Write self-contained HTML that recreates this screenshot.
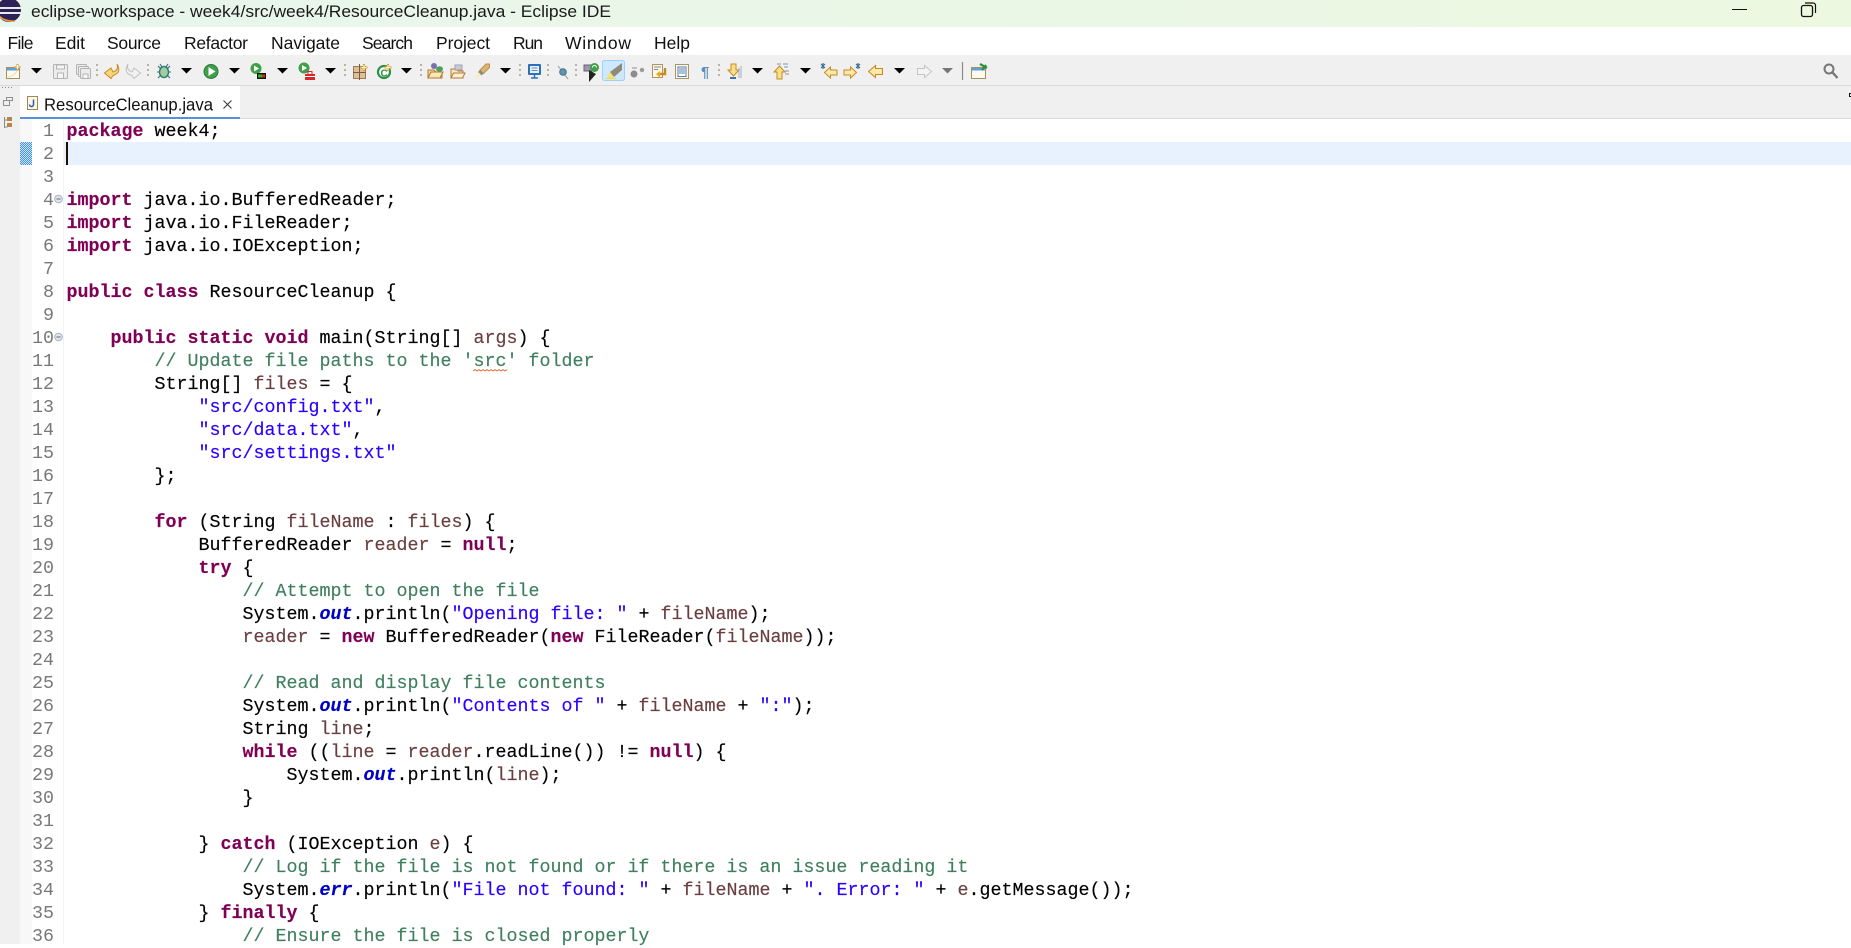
<!DOCTYPE html>
<html><head><meta charset="utf-8"><title>Eclipse IDE</title>
<style>
html,body{margin:0;padding:0;width:1851px;height:944px;overflow:hidden;background:#fff}
.abs{position:absolute}
#code,#nums{position:absolute;margin:0;font-family:"Liberation Mono",monospace;font-size:18.33px;line-height:23px;white-space:pre;color:#000}
#code{left:66.5px;top:120px;-webkit-text-stroke:.15px currentColor}
#nums{left:26px;top:120px;width:28px;text-align:right;color:#787878}
b{color:#7f0055;font-weight:bold}
i{color:#3f7f5f;font-style:normal}
u{color:#2a00ff;text-decoration:none}
s{color:#6a3e3e;text-decoration:none}
em{color:#0000c0;font-style:italic;font-weight:bold}
</style></head><body>
<div class="abs" style="left:0;top:0;width:1851px;height:27px;background:linear-gradient(90deg,#e8f5ec,#ecf8e0)"></div>
<div class="abs" style="left:0;top:27px;width:1851px;height:28px;background:#fff"></div>
<div class="abs" style="left:0;top:55px;width:1851px;height:30px;background:#f0f0f0"></div>
<div class="abs" style="left:0;top:85px;width:1851px;height:1px;background:#d9d9d9"></div>
<div class="abs" style="left:0;top:86px;width:1851px;height:33px;background:#f0f0f0"></div>
<div class="abs" style="left:0;top:118px;width:1851px;height:1px;background:#d9d9d9"></div>
<div class="abs" style="left:0;top:86px;width:20px;height:858px;background:#f0f0f0"></div>
<div class="abs" style="left:20px;top:119px;width:1831px;height:825px;background:#fff"></div>
<div class="abs" style="left:20px;top:119px;width:12px;height:825px;background:#f8f8f8"></div>
<div class="abs" style="left:63px;top:119px;width:1px;height:825px;background:#f3f3f3"></div>
<div class="abs" style="left:20px;top:86px;width:220px;height:31px;background:#fff"></div>
<div class="abs" style="left:20px;top:117px;width:220px;height:2px;background:#5b8fdb"></div>
<div class="abs" style="left:64px;top:142px;width:1787px;height:23px;background:#e8f2fe"></div>
<div class="abs" style="left:66px;top:142px;width:2px;height:23px;background:#1a1000"></div>

<svg class="abs" style="left:0;top:0" width="1851" height="944" viewBox="0 0 1851 944">
<defs><pattern id="dith" width="2" height="2" patternUnits="userSpaceOnUse"><rect width="2" height="2" fill="#3f92e6"/><rect width="1" height="1" fill="#cfe4fa"/><rect x="1" y="1" width="1" height="1" fill="#cfe4fa"/></pattern></defs>
<rect x="20" y="142" width="12" height="23" fill="url(#dith)"/>
<!-- logo -->
<circle cx="9" cy="10" r="12" fill="#2c2255"/>
<path d="M-3 7h24v2H-3zM-3 12h24v2H-3z" fill="#e8e8f0"/>
<path d="M-2 15Q4 22 15 21" stroke="#f0a040" stroke-width="1.6" fill="none"/>
<text x="31" y="17" font-family="Liberation Sans" font-size="17" fill="#1a1a1a" textLength="580" lengthAdjust="spacingAndGlyphs">eclipse-workspace - week4/src/week4/ResourceCleanup.java - Eclipse IDE</text>
<path d="M1732 9.5h15" stroke="#111" stroke-width="1"/>
<rect x="1801.5" y="5.5" width="11" height="11" rx="2" fill="none" stroke="#111" stroke-width="1.3"/>
<path d="M1805 3h8a2.5 2.5 0 0 1 2.5 2.5V13" fill="none" stroke="#111" stroke-width="1.2"/>
<g font-family="Liberation Sans" font-size="17.5" fill="#111">
<text x="7.5" y="49" textLength="26">File</text>
<text x="55" y="49" textLength="30">Edit</text>
<text x="107" y="49" textLength="54">Source</text>
<text x="184" y="49" textLength="64">Refactor</text>
<text x="271" y="49" textLength="69">Navigate</text>
<text x="362" y="49" textLength="51">Search</text>
<text x="436" y="49" textLength="54">Project</text>
<text x="513" y="49" textLength="30">Run</text>
<text x="565" y="49" textLength="66">Window</text>
<text x="654" y="49" textLength="36">Help</text>
</g>
<!-- dropdown arrows -->
<g fill="#000">
<polygon points="31,68 42,68 36.5,73.5"/><polygon points="181,68 192,68 186.5,73.5"/><polygon points="229,68 240,68 234.5,73.5"/><polygon points="277,68 288,68 282.5,73.5"/><polygon points="325,68 336,68 330.5,73.5"/><polygon points="401,68 412,68 406.5,73.5"/><polygon points="500,68 511,68 505.5,73.5"/><polygon points="752,68 763,68 757.5,73.5"/><polygon points="800,68 811,68 805.5,73.5"/><polygon points="894,68 905,68 899.5,73.5"/>
</g>
<polygon points="942,68 953,68 947.5,73.5" fill="#777"/>
<!-- separators -->
<g stroke="#b8b2a2" stroke-width="2" stroke-dasharray="2 3">
<path d="M97 64v15M148 64v15M345 64v15M421 64v15M520 64v15M548 64v15M576 64v15M719 64v15"/>
</g>
<path d="M962.5 62v18" stroke="#8a8a8a" stroke-width="1.2"/>
<!-- new window -->
<rect x="6.5" y="67.5" width="13" height="11" fill="#fdfbef" stroke="#a5905f"/><rect x="7" y="68" width="12" height="2.5" fill="#5f9fdc"/><path d="M8 77Q14 76 18 70" stroke="#f0dc90" fill="none"/>
<path d="M17.5 64v6M14.5 67h6" stroke="#d9a441" stroke-width="2"/><path d="M17.5 65v4M15.5 67h4" stroke="#fff7d8" stroke-width="1"/>
<!-- save -->
<g fill="#ececec" stroke="#b4b4b4"><rect x="53.5" y="64.5" width="14" height="14" rx="1"/><rect x="56.5" y="65" width="8" height="4" fill="#f6f6f6"/><rect x="57.5" y="73" width="6" height="5.5" fill="#f6f6f6"/>
<rect x="76.5" y="64.5" width="10" height="10" rx="1"/><rect x="78.5" y="66.5" width="10" height="10" rx="1"/><rect x="80.5" y="68.5" width="10" height="10" rx="1"/><rect x="83" y="74" width="5" height="4.5" fill="#f6f6f6"/></g>
<!-- back / forward -->
<path d="M117 64Q119 70 113 72L111 68L104.5 73L111 78.500L113 75.500Q122 73 117 64Z" fill="#f9d57e" stroke="#c88a1e"/>
<path d="M128 64Q126 70 132 72L134 68L140.500 73L134 78.500L132 75.500Q123 73 128 64Z" fill="#f2f2f2" stroke="#c0c0c0"/>
<!-- bug -->
<ellipse cx="164" cy="72" rx="4.500" ry="5.500" fill="#9fcfa0" stroke="#3c7f6e" stroke-width="1.500"/>
<path d="M158 66l3 3M170 66l-3 3M157 72h3M171 72h-3M158 78l3-3M170 78l-3-3M160 64l2 3M168 64l-2 3" stroke="#2c6f78" stroke-width="1.100"/>
<!-- run -->
<circle cx="211" cy="71.500" r="7" fill="#3f9f4a" stroke="#2a7a38"/><polygon points="208.500,67 215.500,71.500 208.500,76" fill="#fff"/>
<circle cx="256" cy="68.500" r="5.500" fill="#3f9f4a"/><polygon points="254,65.500 259,68.500 254,71.500" fill="#fff"/><rect x="257" y="73" width="9" height="6" fill="#111"/><rect x="258" y="74.500" width="4" height="3" fill="#22bb22"/><rect x="262" y="74.500" width="3" height="3" fill="#d22"/>
<circle cx="304" cy="68" r="5.500" fill="#3f9f4a"/><polygon points="302,65 307,68 302,71" fill="#fff"/><rect x="305" y="74" width="10" height="6" fill="#d8262c"/><rect x="308" y="71.500" width="4" height="3" fill="none" stroke="#d8262c"/><path d="M305 76.500h10" stroke="#fff"/>
<!-- new type / class -->
<rect x="353.500" y="66.500" width="12" height="12" fill="#dcc09a" stroke="#9f7a50"/><path d="M359.500 64v16M353 72.500h13" stroke="#7f5a38"/>
<path d="M364 64v7M360.500 67.500h7" stroke="#d9a441" stroke-width="2.200"/><path d="M364 65v5M361.500 67.500h5" stroke="#fff5cc"/>
<circle cx="384" cy="72" r="6" fill="#fff" stroke="#2c8f4a" stroke-width="2.200"/><text x="380.500" y="76.500" font-family="Liberation Sans" font-size="10" font-weight="bold" fill="#2c8f4a">C</text>
<path d="M388 64v7M384.500 67.500h7" stroke="#d9a441" stroke-width="2.200"/><path d="M388 65v5M385.500 67.500h5" stroke="#fff5cc"/>
<!-- open -->
<path d="M428 70h6l2 2h6v6h-14z" fill="#f8d898" stroke="#b47a30"/><path d="M428 78l3-6h12l-3 6z" fill="#fbe6b8" stroke="#b47a30"/><circle cx="434" cy="66" r="3" fill="#7a6fb0"/><ellipse cx="439.500" cy="69" rx="3.500" ry="2.800" fill="#4f9f5f"/>
<path d="M451 69h5l2 2h5v7h-12z" fill="#fbe8c0" stroke="#b47a30"/><path d="M451 78l2.500-5h11.500l-2.500 5z" fill="#fdf0d2" stroke="#b47a30"/><rect x="455" y="65" width="7" height="5" fill="#c9c9d6" stroke="#a0a0b0"/>
<path d="M480 70l6-6h3.500v3.500l-6 6z" fill="#d8b57e" stroke="#c09048"/><path d="M480 70l3.500 3.500-2 2-3.500-3.500z" fill="#8a8a8a"/><path d="M478 72l3.500 3.500-6.500 3.500z" fill="#f7efb8"/>
<!-- monitor -->
<rect x="528" y="64" width="13" height="11" rx="1" fill="#2f6fb8"/><rect x="530" y="66" width="9" height="7" fill="#e8f0fa"/><path d="M531.500 68h6M531.500 70.500h6" stroke="#5f8fc0"/><path d="M531 78h7M534.500 75v3" stroke="#2f6fb8" stroke-width="1.500"/>
<path d="M558 66l10 13" stroke="#a8a8a8" stroke-width="1.200"/><circle cx="563" cy="72" r="3.300" fill="#5f95ad" stroke="#3f6f90"/>
<rect x="584" y="65" width="8" height="6" fill="#9f96b0" stroke="#6a6070"/><polygon points="589,70 589,82 596,74" fill="#222"/><circle cx="594.500" cy="67.500" r="4.500" fill="#3f9f4a"/><path d="M592.500 67.500a2 2 0 0 1 4 0" stroke="#fff" fill="none"/>
<!-- highlight -->
<rect x="602.500" y="60.500" width="22" height="20" rx="2" fill="#cde8ff" stroke="#99d1ff"/>
<path d="M622 63L610 72L614 77L622 70Z" fill="#8e8a78"/><path d="M610 72L607 78H613L614 77Z" fill="#f7e36a"/><path d="M606 78.500h10" stroke="#f3d84a"/>
<!-- next ones -->
<circle cx="634" cy="74" r="3.500" fill="#8c8c8c"/><circle cx="642" cy="70" r="2.200" fill="#9a9a9a"/><path d="M632 68h5" stroke="#b0b0b0" stroke-width="1.500"/>
<rect x="652.500" y="64.500" width="10" height="13" fill="#fbf7e6" stroke="#a89668"/><path d="M654 67h7M654 69.500h4" stroke="#8a8a8a"/><path d="M665 68v6h-6" fill="none" stroke="#c88a1e" stroke-width="2.400"/><polygon points="656,74 660,71 660,78" fill="#e9a92a"/>
<rect x="675.500" y="64.500" width="13" height="14" fill="#fbf7e6" stroke="#a89668"/><rect x="678" y="67" width="8" height="9.500" fill="#fff" stroke="#5a7fb0"/><path d="M679 69h6M679 71h6M679 73h6" stroke="#5a7fb0"/>
<text x="701" y="77" font-family="Liberation Sans" font-weight="bold" font-size="15" fill="#5f8fb8">¶</text>
<!-- down/up annotation -->
<path d="M731 64h5v6h3l-5.500 6l-5.500-6h3z" fill="#fbe08a" stroke="#c88a1e"/><path d="M730 78h6" stroke="#3f6fa8" stroke-width="2"/><path d="M739 68v10M741 66v12" stroke="#a0b0c8"/>
<path d="M780 79v-7h-3l5.500-6l5.500 6h-3v7z" fill="#fbe08a" stroke="#c88a1e" transform="translate(-3 0)"/><path d="M777 64h4M783 64h5M784 67h4M785 71h4M785 74h4" stroke="#7f95b8"/>
<!-- nav arrows -->
<path d="M824.500 72.500l6-5.500v3h6.500v5h-6.500v3z" fill="#fce8a8" stroke="#c88a1e"/><path d="M821 64l4 4M825 64l-4 4M823 63v6" stroke="#3f6f90" stroke-width="1.200"/>
<path d="M856.500 72.500l-6-5.500v3h-6.500v5h6.500v3z" fill="#fce8a8" stroke="#c88a1e"/><path d="M856 64l4 4M860 64l-4 4M858 63v6" stroke="#3f6f90" stroke-width="1.200"/>
<path d="M868.500 71.500l7-6v3h7v6h-7v3z" fill="#fce8a8" stroke="#c88a1e"/>
<path d="M931.500 71.500l-7-6v3h-7v6h7v3z" fill="#f4f4f4" stroke="#c4c4c4"/>
<rect x="971.500" y="67.500" width="14" height="11" fill="#fdfbef" stroke="#a5905f"/><rect x="972" y="68" width="13" height="2.500" fill="#5f9fdc"/><path d="M982 70l4-5M980 64l7 4" stroke="#2f8f3a" stroke-width="2.200"/>
<!-- search -->
<circle cx="1829" cy="69" r="4.500" fill="none" stroke="#777" stroke-width="2"/><path d="M1832.500 72.500l5 5.500" stroke="#777" stroke-width="2.400"/>
<rect x="1849.500" y="93.500" width="3" height="3" fill="none" stroke="#111"/>
<!-- left rail -->
<path d="M2 87.500h12" stroke="#8a8a8a" stroke-width="1" stroke-dasharray="1 2"/>
<g fill="none" stroke="#8f8f8f"><rect x="3.500" y="100.500" width="6" height="5"/><rect x="6.500" y="97.500" width="6" height="3"/></g>
<path d="M4.500 117v11M4.500 120h3M4.500 127h3" stroke="#8a8a8a" fill="none"/>
<g fill="#b8864a"><rect x="7" y="117" width="5" height="4"/><rect x="7" y="123" width="5" height="4"/></g>
<!-- tab -->
<rect x="27.500" y="96.500" width="10" height="13" fill="#fbf8ea" stroke="#a0884f"/><path d="M33.500 99.500v5a2 2 0 0 1-4 0" fill="none" stroke="#2f5fa0" stroke-width="1.500"/>
<text x="44" y="110.500" font-family="Liberation Sans" font-size="17.500" fill="#111" textLength="169" lengthAdjust="spacingAndGlyphs">ResourceCleanup.java</text>
<path d="M223.500 100.500l8 8M231.500 100.500l-8 8" stroke="#333" stroke-width="1"/>
<!-- fold icons -->
<g fill="#e0e6ee" stroke="#a8b0bc"><circle cx="58.500" cy="199" r="3.800"/><circle cx="58.500" cy="337" r="3.800"/></g>
<path d="M56.500 199h4M56.500 337h4" stroke="#667"/>
<!-- squiggle -->
<path d="M473 371l2-1.500 2 1.500 2-1.500 2 1.500 2-1.500 2 1.500 2-1.500 2 1.500 2-1.500 2 1.500 2-1.500 2 1.500 2-1.500 2 1.500 2-1.500 2 1.500 2-1.500" fill="none" stroke="#e0683a" stroke-width=".9"/>
</svg>

<pre id="nums">1
2
3
4
5
6
7
8
9
10
11
12
13
14
15
16
17
18
19
20
21
22
23
24
25
26
27
28
29
30
31
32
33
34
35
36</pre>
<pre id="code"><b>package</b> week4;


<b>import</b> java.io.BufferedReader;
<b>import</b> java.io.FileReader;
<b>import</b> java.io.IOException;

<b>public</b> <b>class</b> ResourceCleanup {

    <b>public</b> <b>static</b> <b>void</b> main(String[] <s>args</s>) {
        <i>// Update file paths to the 'src' folder</i>
        String[] <s>files</s> = {
            <u>"src/config.txt"</u>,
            <u>"src/data.txt"</u>,
            <u>"src/settings.txt"</u>
        };

        <b>for</b> (String <s>fileName</s> : <s>files</s>) {
            BufferedReader <s>reader</s> = <b>null</b>;
            <b>try</b> {
                <i>// Attempt to open the file</i>
                System.<em>out</em>.println(<u>"Opening file: "</u> + <s>fileName</s>);
                <s>reader</s> = <b>new</b> BufferedReader(<b>new</b> FileReader(<s>fileName</s>));

                <i>// Read and display file contents</i>
                System.<em>out</em>.println(<u>"Contents of "</u> + <s>fileName</s> + <u>":"</u>);
                String <s>line</s>;
                <b>while</b> ((<s>line</s> = <s>reader</s>.readLine()) != <b>null</b>) {
                    System.<em>out</em>.println(<s>line</s>);
                }

            } <b>catch</b> (IOException <s>e</s>) {
                <i>// Log if the file is not found or if there is an issue reading it</i>
                System.<em>err</em>.println(<u>"File not found: "</u> + <s>fileName</s> + <u>". Error: "</u> + <s>e</s>.getMessage());
            } <b>finally</b> {
                <i>// Ensure the file is closed properly</i></pre>
</body></html>
